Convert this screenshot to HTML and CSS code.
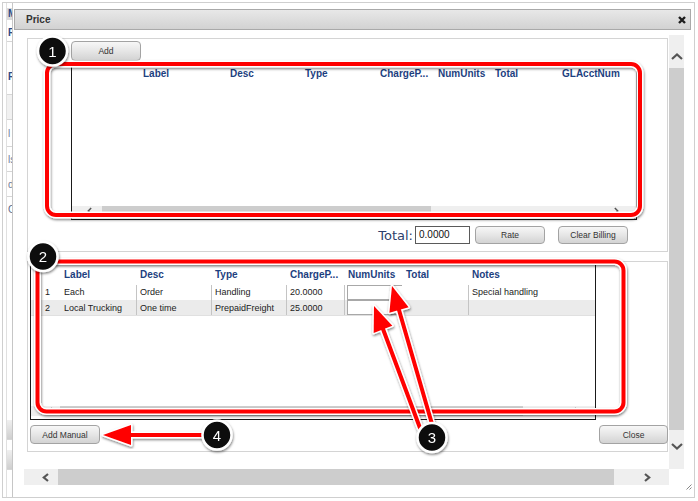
FILE: index.html
```html
<!DOCTYPE html>
<html>
<head>
<meta charset="utf-8">
<title>Price</title>
<link rel="stylesheet" href="styles.css">
</head>
<body>
<div class="screen">
  <div class="frame">
    <div class="backpage">
      <div class="bp-strip">
        <div class="bp bp-m">M</div>
        <div class="bp bp-r1">R</div>
        <div class="bp bp-r2">R</div>
        <div class="bp bp-blank"></div>
        <div class="bp bp-s1">l</div>
        <div class="bp bp-s2">ls</div>
        <div class="bp bp-s3">ds</div>
        <div class="bp bp-co">Co</div>
        <div class="bp-gap"></div>
        <div class="bp bp-btn"></div>
        <div class="bp bp-btn2"></div>
      </div>
    </div>
    <div class="dialog">
      <div class="titlebar">
        <span class="title">Price</span>
        <svg class="close" viewBox="0 0 8 8"><path d="M1 1 L7 7 M7 1 L1 7"/></svg>
      </div>
      <div class="dlg-body">
        <div class="scroller">
          <div class="viewport">
            <div class="panel panel-top">
              <div class="btn btn-add">Add</div>
              <div class="grid grid-top">
                <div class="grid-head cols-top">
                  <span class="c"></span><span class="c">Label</span><span class="c">Desc</span><span class="c">Type</span><span class="c">ChargeP...</span><span class="c">NumUnits</span><span class="c">Total</span><span class="c">GLAcctNum</span>
                </div>
                <div class="grid-body"></div>
                <div class="gbar gbar-top">
                  <div class="gb-left"><svg class="chev-s" viewBox="0 0 6 9"><path d="M5 1 L1.5 4.5 L5 8"/></svg></div>
                  <div class="gb-thumb"></div>
                  <div class="gb-track"><svg class="chev-s" viewBox="0 0 6 9"><path d="M1 1 L4.5 4.5 L1 8"/></svg></div>
                </div>
              </div>
              <div class="total-row">
                <span class="total-label">Total:</span>
                <div class="total-input">0.0000</div>
                <div class="btn btn-rate">Rate</div>
                <div class="btn btn-clear">Clear Billing</div>
              </div>
            </div>
            <div class="panel panel-bottom">
              <div class="grid grid-bottom">
                <div class="grid-head cols-bottom">
                  <span class="c"></span><span class="c">Label</span><span class="c">Desc</span><span class="c">Type</span><span class="c">ChargeP...</span><span class="c">NumUnits</span><span class="c">Total</span><span class="c">Notes</span>
                </div>
                <div class="row row-1 cols-bottom">
                  <span class="c rn">1</span><span class="c">Each</span><span class="c sep">Order</span><span class="c sep">Handling</span><span class="c sep">20.0000</span><span class="c sep cin"><span class="num-input"></span></span><span class="c"></span><span class="c sep">Special handling</span>
                </div>
                <div class="row row-2 cols-bottom">
                  <span class="c rn">2</span><span class="c">Local Trucking</span><span class="c sep">One time</span><span class="c sep">PrepaidFreight</span><span class="c sep">25.0000</span><span class="c sep cin"><span class="num-input"></span></span><span class="c"></span><span class="c sep"></span>
                </div>
                <div class="grid-body"></div>
                <div class="gbar gbar-bottom">
                  <div class="gb-left"><svg class="chev-s" viewBox="0 0 6 9"><path d="M5 1 L1.5 4.5 L5 8"/></svg></div>
                  <div class="gb-thumb"></div>
                  <div class="gb-track"><svg class="chev-s" viewBox="0 0 6 9"><path d="M1 1 L4.5 4.5 L1 8"/></svg></div>
                </div>
              </div>
              <div class="btn-row">
                <div class="btn btn-manual">Add Manual</div>
                <div class="btn btn-close">Close</div>
              </div>
            </div>
          </div>
          <div class="vbar">
            <div class="vb-top"><svg class="chev-v" viewBox="0 0 12 7"><path d="M1 6 L6 1.5 L11 6"/></svg></div>
            <div class="vb-thumb"></div>
            <div class="vb-bottom"><svg class="chev-v" viewBox="0 0 12 7"><path d="M1 1 L6 5.5 L11 1"/></svg></div>
          </div>
          <div class="hbar">
            <div class="hb-left"><svg class="chev" viewBox="0 0 7 9"><path d="M6 1 L1.8 4.5 L6 8"/></svg></div>
            <div class="hb-thumb"></div>
            <div class="hb-track"><svg class="chev" viewBox="0 0 7 9"><path d="M1 1 L5.2 4.5 L1 8"/></svg></div>
          </div>
          <div class="corner"></div>
        </div>
      </div>
      <svg class="grip" viewBox="0 0 7 7"><path d="M6.5 1.5 L1.5 6.5 M6.5 4.5 L4.5 6.5"/></svg>
    </div>
  </div>
  <svg class="annot" width="698" height="501" viewBox="0 0 698 501">
    <defs>
      <filter id="sh" x="-10%" y="-10%" width="125%" height="130%">
        <feDropShadow dx="0.6" dy="1.5" stdDeviation="1.2" flood-color="#000" flood-opacity="0.5"/>
      </filter>
    </defs>
    <g filter="url(#sh)" fill="none" stroke-linejoin="round" stroke-linecap="round">
      <rect x="47" y="64" width="593" height="151" rx="9" stroke="#fff" stroke-width="7"/>
      <rect x="47" y="64" width="593" height="151" rx="9" stroke="#ff0000" stroke-width="4"/>
    </g>
    <g filter="url(#sh)" fill="none" stroke-linejoin="round" stroke-linecap="round">
      <rect x="37.5" y="261.5" width="586" height="150" rx="9" stroke="#fff" stroke-width="7"/>
      <rect x="37.5" y="261.5" width="586" height="150" rx="9" stroke="#ff0000" stroke-width="4"/>
    </g>
    <g filter="url(#sh)" stroke-linejoin="round" stroke-linecap="round">
      <line x1="432" y1="424" x2="399" y2="310" stroke="#fff" stroke-width="7"/>
      <line x1="420" y1="428" x2="383" y2="329" stroke="#fff" stroke-width="7"/>
      <polygon points="392,286 408.6,307.2 389.4,312.8" fill="#fff" stroke="#fff" stroke-width="3"/>
      <polygon points="374,306 392.3,325.7 373.7,332.9" fill="#fff" stroke="#fff" stroke-width="3"/>
      <line x1="432" y1="424" x2="399" y2="310" stroke="#ff0000" stroke-width="4"/>
      <line x1="420" y1="428" x2="383" y2="329" stroke="#ff0000" stroke-width="4"/>
      <polygon points="392,286 408.6,307.2 389.4,312.8" fill="#ff0000"/>
      <polygon points="374,306 392.3,325.7 373.7,332.9" fill="#ff0000"/>
    </g>
    <g filter="url(#sh)" stroke-linejoin="round" stroke-linecap="round">
      <line x1="205" y1="435" x2="128" y2="435" stroke="#fff" stroke-width="7"/>
      <polygon points="103,435 131,425 131,445" fill="#fff" stroke="#fff" stroke-width="3"/>
      <line x1="205" y1="435" x2="128" y2="435" stroke="#ff0000" stroke-width="4"/>
      <polygon points="103,435 131,425 131,445" fill="#ff0000"/>
    </g>
    <g class="marker" filter="url(#sh)">
      <circle cx="52.5" cy="51" r="14.5"/>
      <text x="52.5" y="51">1</text>
    </g>
    <g class="marker" filter="url(#sh)">
      <circle cx="43" cy="256.5" r="14.5"/>
      <text x="43" y="256.5">2</text>
    </g>
    <g class="marker" filter="url(#sh)">
      <circle cx="432" cy="437.5" r="14.5"/>
      <text x="432" y="437.5">3</text>
    </g>
    <g class="marker" filter="url(#sh)">
      <circle cx="217" cy="435" r="14.5"/>
      <text x="217" y="435">4</text>
    </g>
  </svg>
</div>
</body>
</html>
```

FILE: styles.css
```css
* { box-sizing: border-box; }
html, body { margin: 0; padding: 0; }
body {
  width: 698px;
  height: 501px;
  overflow: hidden;
  background: #ffffff;
  font-family: "Liberation Sans", Arial, sans-serif;
  color: #222;
}
.screen {
  position: relative;
  width: 698px;
  height: 501px;
  padding: 2px 3px 3px 2px;
}
.frame {
  display: flex;
  width: 693px;
  height: 496px;
  border: 1px solid #cfcfcf;
}

/* page behind the dialog */
.backpage {
  width: 10px;
  height: 100%;
  padding-left: 3px;
  border-right: 1px solid #c6c6c6;
  flex: none;
}
.bp-strip {
  width: 6px;
  height: 100%;
  overflow: hidden;
  border-left: 1px solid #e0e0e0;
  font-size: 10px;
  color: #2e4a86;
  white-space: nowrap;
}
.bp { border-bottom: 1px solid #d6d6d6; padding-left: 1px; }
.bp-m { margin-top: 5px; height: 12px; line-height: 12px; background: #dadada; font-weight: bold; border-bottom: none; }
.bp-r1 { height: 22px; line-height: 26px; font-weight: bold; }
.bp-r2 { height: 53px; padding-top: 29px; line-height: 12px; font-weight: bold; }
.bp-blank { height: 25px; background: #f1f1f1; }
.bp-s1 { height: 27px; line-height: 27px; color: #6d7c9c; }
.bp-s2 { height: 25px; line-height: 25px; color: #6d7c9c; }
.bp-s3 { height: 25px; line-height: 25px; color: #6d7c9c; }
.bp-co { height: 25px; line-height: 25px; color: #5a6a8a; border-bottom: none; }
.bp-gap { height: 198px; }
.bp-btn { height: 20px; background: linear-gradient(#f0f0f0, #cfcfcf); }
.bp-btn2 { margin-top: 10px; height: 20px; background: linear-gradient(#f0f0f0, #cfcfcf); }

/* dialog */
.dialog {
  position: relative;
  flex: 1;
  height: 100%;
  padding: 6px 3px 0 1px;
}
.titlebar {
  display: flex;
  align-items: center;
  justify-content: space-between;
  height: 21px;
  border: 1px solid #a9a9a9;
  background: linear-gradient(#e8e8e8, #d2d2d2);
  padding: 0 4px 0 11px;
}
.title {
  font-size: 10px;
  font-weight: bold;
  color: #333;
}
.close {
  width: 8px;
  height: 8px;
  fill: none;
  stroke: #1e1e1e;
  stroke-width: 2.4;
}
.dlg-body {
  padding: 5px 7px 0 10px;
}
.scroller {
  display: grid;
  grid-template-columns: 645px 15px;
  grid-template-rows: 434px 16px;
}
.viewport {
  overflow: hidden;
  padding: 3px 1px 0 3px;
}
.panel {
  border: 1px solid #d4d4d4;
  background: #fff;
}
.panel-top {
  height: 214px;
  padding: 2px 0 0 43px;
}
.panel-bottom {
  margin-top: 9px;
  height: 191px;
  padding: 2px 0 0 2px;
}

/* buttons */
.btn {
  display: flex;
  align-items: center;
  justify-content: center;
  width: 70px;
  border: 1px solid #a3a3a3;
  border-radius: 4px;
  background: linear-gradient(#f7f7f7 0%, #e6e6e6 50%, #d3d3d3 100%);
  font-size: 8.5px;
  color: #333;
  white-space: nowrap;
}
.btn-add { height: 20px; }
.btn-rate { height: 18px; margin-left: 5px; }
.btn-clear { height: 18px; margin-left: 13px; }
.btn-manual { height: 19px; }
.btn-close { height: 19px; width: 69px; margin-right: -1px; }

/* grids */
.grid {
  display: flex;
  flex-direction: column;
  width: 566px;
  border: 1px solid #1a1a1a;
  background: #fff;
}
.grid-top { margin-top: 2px; height: 157px; }
.grid-bottom { height: 156px; }
.grid-head {
  display: grid;
  height: 20px;
  line-height: 20px;
  font-size: 10px;
  font-weight: bold;
  color: #1d3f7f;
  flex: none;
}
.cols-top { grid-template-columns: 67px 87px 75px 75px 58px 57px 67px 1fr; }
.cols-bottom { grid-template-columns: 29px 76px 75px 75px 58px 58px 66px 1fr; }
.c {
  display: block;
  padding-left: 3px;
  border-left: 1px solid transparent;
  white-space: nowrap;
  overflow: hidden;
}
.sep { border-left-color: #c4c4c4; }
.row {
  display: grid;
  font-size: 9px;
  color: #222;
  flex: none;
}
.row-1 { height: 15px; line-height: 15px; }
.row-2 { height: 16px; line-height: 16px; background: #ebebeb; border-bottom: 1px solid #e0e0e0; }
.rn { padding-left: 13px; }
.cin { padding-left: 2px; }
.num-input {
  display: block;
  width: 56px;
  height: 100%;
  border: 1px solid #a8a8a8;
  background: #fff;
}
.grid-body { flex: 1; }
.gbar {
  display: flex;
  height: 10px;
  margin-bottom: 3px;
  flex: none;
}
.gb-left {
  display: flex;
  align-items: center;
  background: #efefef;
}
.gbar-top .gb-left { width: 30px; padding-left: 15px; }
.gbar-top .gb-thumb { width: 329px; }
.gbar-top .gb-track { padding-right: 17px; }
.gbar-bottom .gb-left { width: 29px; padding-left: 17px; }
.gbar-bottom .gb-thumb { width: 463px; }
.gbar-bottom .gb-track { padding-right: 16px; }
.gb-thumb { background: #cdcdcd; }
.gb-track {
  flex: 1;
  display: flex;
  align-items: center;
  justify-content: flex-end;
  background: #efefef;
}
.chev-s {
  width: 5px;
  height: 8px;
  fill: none;
  stroke: #555;
  stroke-width: 1.8;
}

/* total row */
.total-row {
  display: flex;
  align-items: center;
  justify-content: flex-end;
  height: 18px;
  margin-top: 6px;
  padding-right: 39px;
}
.total-label {
  font-family: "DejaVu Sans", Verdana, sans-serif;
  font-size: 13px;
  color: #2d3f6b;
  margin-right: 2px;
}
.total-input {
  width: 55px;
  height: 18px;
  border: 1px solid #5a5a5a;
  background: #fff;
  font-size: 10px;
  line-height: 16px;
  padding-left: 3px;
  color: #111;
}

.btn-row {
  display: flex;
  justify-content: space-between;
  margin-top: 5px;
}

/* main scrollbars */
.vbar {
  display: flex;
  flex-direction: column;
  background: #efefef;
}
.vb-top {
  height: 33px;
  display: flex;
  justify-content: center;
  padding-top: 18px;
}
.vb-thumb { height: 362px; background: #cdcdcd; }
.vb-bottom {
  flex: 1;
  display: flex;
  justify-content: center;
  padding-top: 13px;
}
.chev-v {
  width: 12px;
  height: 7px;
  fill: none;
  stroke: #555;
  stroke-width: 2.2;
}
.hbar {
  display: flex;
  background: #efefef;
}
.hb-left {
  width: 34px;
  display: flex;
  align-items: center;
  padding-left: 18px;
}
.hb-thumb { width: 556px; background: #cdcdcd; }
.hb-track {
  flex: 1;
  display: flex;
  align-items: center;
  justify-content: flex-end;
  padding-right: 18px;
}
.chev {
  width: 7px;
  height: 9px;
  fill: none;
  stroke: #555;
  stroke-width: 2.2;
}
.corner { background: #fff; }
.grip {
  position: absolute;
  right: 2px;
  bottom: 7px;
  width: 7px;
  height: 7px;
  fill: none;
  stroke: #888;
  stroke-width: 1;
}

/* annotation overlay */
.annot {
  position: absolute;
  left: 0;
  top: 0;
  pointer-events: none;
}
.marker circle {
  fill: #0b0b0b;
  stroke: #fff;
  stroke-width: 2.5;
}
.marker text {
  fill: #fff;
  font-family: "Liberation Sans", Arial, sans-serif;
  font-size: 15px;
  text-anchor: middle;
  dominant-baseline: central;
}
```
